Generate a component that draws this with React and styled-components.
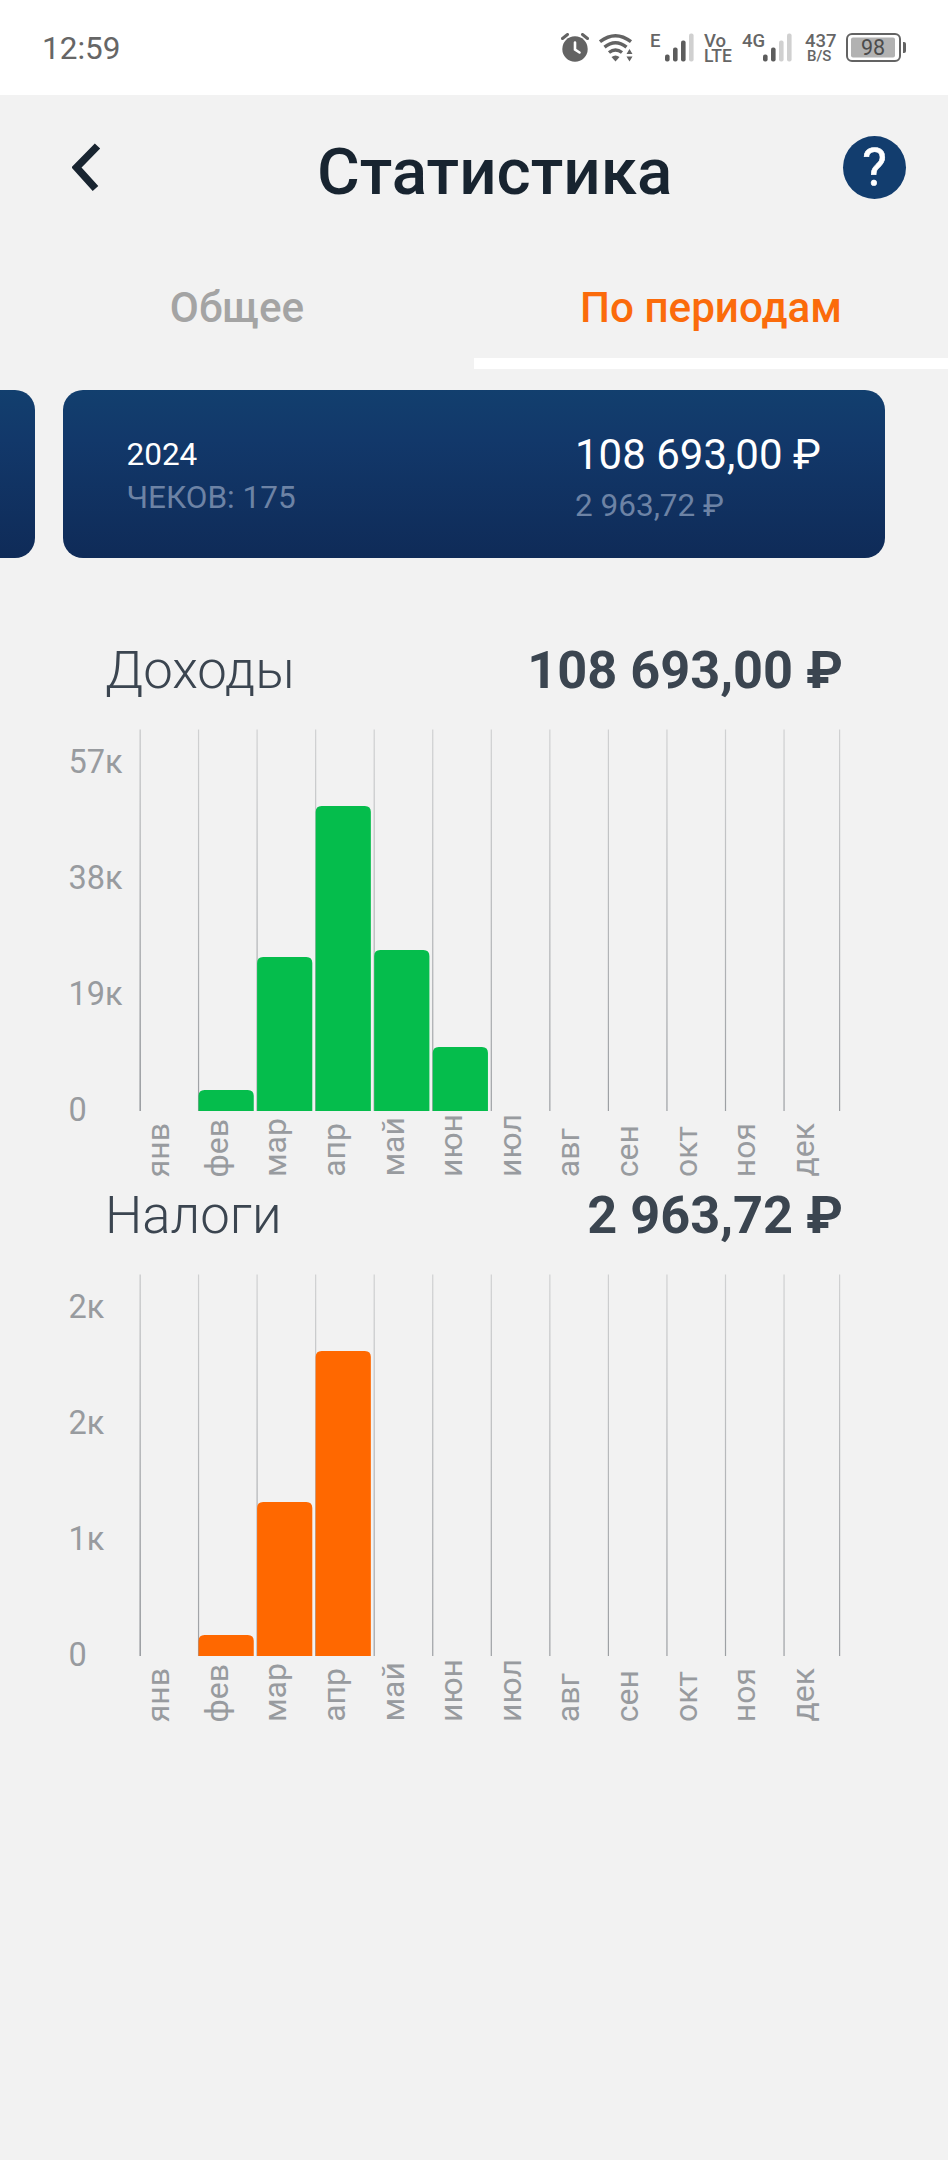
import React from "react";

import styled, {createGlobalStyle} from "styled-components";


const GlobalStyle = createGlobalStyle`
  body {
    margin: 0;
    background: #f2f2f2;
    font-family: Roboto, "Noto Sans", sans-serif;
  }

  * {
    box-sizing: border-box;
  }
`;

const Screen = styled.div`
  width: 948px;
  height: 2160px;
  overflow: hidden;
  background: #f2f2f2;
`;

const StatusBar = styled.div`
  height: 95px;
  padding: 3px 42px 0 42px;
  display: flex;
  justify-content: space-between;
  align-items: center;
  background: #ffffff;
  color: #666666;
`;
const Clock = styled.div`
  font-size: 31.5px;
  line-height: 38px;
`;
const StatusIcons = styled.div`
  height: 32px;
  display: flex;
  align-items: flex-start;
`;
const StatusIcon = styled.svg`
  display: block;
  flex: none;
  margin-right: ${props => props.$gap || 0}px;
`;
const Network = styled.div`
  width: ${props => props.$width}px;
  font-size: 18.5px;
  font-weight: 500;
  line-height: 16px;
`;
const NetworkSub = styled.div`
  padding-left: ${props => props.$indent || 0}px;
  font-size: ${props => props.$size}px;
  line-height: 15px;
`;

const Header = styled.div`
  height: 145px;
  padding: 0 42px 0 72px;
  display: flex;
  align-items: center;
`;
const BackIcon = styled.svg`
  display: block;
  width: 245px;
  height: 48px;
  margin-top: -2px;
`;
const Title = styled.div`
  flex: 1;
  padding-top: 8px;
  font-size: 65.5px;
  font-weight: 500;
  line-height: 76px;
  color: #182430;
`;
const Help = styled.div`
  width: 63px;
  height: 63px;
  border-radius: 50%;
  background: #123d6e;
  color: #ffffff;
  font-size: 52px;
  -webkit-text-stroke: 0.6px #ffffff;
  line-height: 64px;
  text-align: center;
`;

const Tabs = styled.div`
  display: flex;
`;
const Tab = styled.div`
  flex: 1;
  height: 129px;
  padding-top: 16px;
  border-bottom: 11px solid ${props => props.$active ? "#ffffff" : "transparent"};
  display: flex;
  align-items: center;
  justify-content: center;
  font-size: 42.2px;
  font-weight: 500;
  color: ${props => props.$active ? "#fb6b0b" : "#a4a4a4"};
`;

const Cards = styled.div`
  margin-top: 21px;
  height: 168px;
  display: flex;
  gap: 28px;
`;
const Card = styled.div`
  width: ${props => props.$cut ? 35 : 822}px;
  border-radius: ${props => props.$cut ? "0 20px 20px 0" : "20px"};
  background: linear-gradient(#123f6e, #12386a 30%, #0f2b58);
  display: flex;
  color: #ffffff;
`;
const Period = styled.div`
  width: 512px;
  padding: 43px 0 0 63.5px;
  font-size: 31.5px;
  line-height: 43px;
`;
const Sums = styled.div`
  padding-top: 39px;
  font-size: 42px;
  line-height: 51px;
`;
const Muted = styled.div`
  font-size: 31.5px;
  color: #6d83a5;
`;

const ChartSection = styled.div`
  height: 545px;
`;
const Charts = styled.div`
  padding-top: 76px;
`;
const ChartHeader = styled.div`
  height: 72px;
  padding: 0 105px;
  display: flex;
  justify-content: space-between;
  align-items: center;
  color: #3b4550;
`;
const ChartName = styled.div`
  font-size: 52.7px;
  font-weight: 300;
`;
const ChartTotal = styled.div`
  font-size: 52.3px;
  font-weight: 700;
`;
const ChartBody = styled.div`
  display: flex;
  color: #989b9f;
  font-size: 32px;
`;
const Scale = styled.div`
  width: 139px;
  height: 386px;
  margin-top: 37px;
  padding-left: 68.5px;
  display: flex;
  flex-direction: column;
  justify-content: space-between;
  font-size: 32.5px;
  line-height: 38px;
`;
const Plot = styled.svg`
  display: block;
  margin-top: 23px;
`;
const Months = styled.div`
  height: 66px;
  padding-left: 0.3px;
  display: grid;
  grid-template-columns: repeat(12, 58.6px);
  align-items: end;
`;
const Month = styled.div`
  width: 39px;
  line-height: 39px;
  writing-mode: vertical-rl;
  transform: rotate(180deg);
`;

const months = ["янв", "фев", "мар", "апр", "май", "июн", "июл", "авг", "сен", "окт", "ноя", "дек"];
const plotHeight = 382;
const step = 58.55;

const charts = [
    {id: "income", name: "Доходы", total: "108 693,00 ₽", color: "#05bd4c", scale: ["57к", "38к", "19к", "0"], bars: [0, 21, 154, 305, 161, 64]},
    {id: "taxes", name: "Налоги", total: "2 963,72 ₽", color: "#ff6800", scale: ["2к", "2к", "1к", "0"], bars: [0, 21, 154, 305]},
];

function barPath(i, h) {
    const x = i * step + 1;
    const top = plotHeight - h;
    return `M${x} ${plotHeight}V${top + 6}q0 -6 6 -6h43.2q6 0 6 6V${plotHeight}z`;
}

function Chart({id, name, total, color, scale, bars}) {
    // the last line closes the axis a bit earlier than a full step
    const lines = months.map((m, i) => i * step + 0.4).concat(700);
    return (
        <ChartSection>
            <ChartHeader>
                <ChartName>{name}</ChartName>
                <ChartTotal>{total}</ChartTotal>
            </ChartHeader>
            <ChartBody>
                <Scale>
                    {scale.map((label, i) => <div key={i}>{label}</div>)}
                </Scale>
                <div>
                    <Plot width="703" height={plotHeight}>
                        <defs>
                            <linearGradient id={id} x1="0" y1="0" x2="0" y2="1">
                                <stop offset="0" stopColor="#d0d1d2"/>
                                <stop offset="1" stopColor="#9c9fa3"/>
                            </linearGradient>
                        </defs>
                        {lines.map((x, i) => (
                            <rect key={i} x={x} y="0.5" width={i === 0 ? 1.6 : 1.2} height={plotHeight - 0.5} fill={`url(#${id})`}/>
                        ))}
                        {bars.map((h, i) => h > 0 && <path key={i} d={barPath(i, h)} fill={color}/>)}
                    </Plot>
                    <Months>
                        {months.map(m => <Month key={m}>{m}</Month>)}
                    </Months>
                </div>
            </ChartBody>
        </ChartSection>
    );
}

function Signal({level, gap}) {
    return (
        <StatusIcon width="29" height="32" $gap={gap}>
            {[0, 1, 2, 3].map(i => (
                <rect key={i} x={i * 8} y={21.5 - i * 7} width="4.6" height={7 + i * 7} rx="2" fill={i < level ? "#5c5c5c" : "#d0d0d0"}/>
            ))}
        </StatusIcon>
    );
}

function App() {
    return (
        <>
            <GlobalStyle/>
            <Screen>
                <StatusBar>
                    <Clock>12:59</Clock>
                    <StatusIcons>
                        <StatusIcon width="28" height="32" $gap={10}>
                            <circle cx="14" cy="16" r="12.7" fill="#636363"/>
                            <path d="M1.5 5.5L6.5 1.5M26.5 5.5L21.5 1.5" stroke="#636363" strokeWidth="3" strokeLinecap="round"/>
                            <path d="M14 9.5V16.5L18.5 19.5" stroke="#ffffff" strokeWidth="2.6" fill="none" strokeLinecap="round"/>
                        </StatusIcon>
                        <StatusIcon width="35" height="32" $gap={16}>
                            <g fill="none" stroke="#636363" strokeWidth="3.4">
                                <path d="M1 8.7Q16.5 -3.3 32 8.7"/>
                                <path d="M5.5 14.2Q16.5 5.5 27.5 14.2"/>
                                <path d="M10 19.5Q16.5 14.5 23 19.5"/>
                            </g>
                            <path d="M12.5 24Q16.5 21 20.5 24L16.5 28.5z" fill="#636363"/>
                            <path d="M27.5 21L30.5 16L33.5 21zM27.5 23.5L30.5 28.5L33.5 23.5z" fill="#636363"/>
                        </StatusIcon>
                        <Network $width={15}>E</Network>
                        <Signal level={3} gap={10}/>
                        <Network $width={38}>
                            Vo
                            <NetworkSub $size={17.5}>LTE</NetworkSub>
                        </Network>
                        <Network $width={21}>4G</Network>
                        <Signal level={2} gap={13}/>
                        <Network $width={41}>
                            437
                            <NetworkSub $size={15} $indent={2}>B/S</NetworkSub>
                        </Network>
                        <StatusIcon width="60" height="32">
                            <rect x="1" y="1" width="53" height="27" rx="5" fill="none" stroke="#636363" strokeWidth="2"/>
                            <rect x="5" y="4.5" width="44" height="20" rx="2" fill="#b2b2b2"/>
                            <path d="M57 9h1q2 0 2 2v7q0 2 -2 2h-1z" fill="#636363"/>
                            <text x="27" y="22.3" textAnchor="middle" fontSize="21.5" fill="#4c4c4c">98</text>
                        </StatusIcon>
                    </StatusIcons>
                </StatusBar>
                <Header>
                    <BackIcon viewBox="0 0 245 48">
                        <path d="M25.5 3L4.5 24.5L23.5 45.5" fill="none" stroke="#182430" strokeWidth="7.5"/>
                    </BackIcon>
                    <Title>Статистика</Title>
                    <Help>?</Help>
                </Header>
                <Tabs>
                    <Tab>Общее</Tab>
                    <Tab $active>По периодам</Tab>
                </Tabs>
                <Cards>
                    <Card $cut/>
                    <Card>
                        <Period>
                            2024
                            <Muted>ЧЕКОВ: 175</Muted>
                        </Period>
                        <Sums>
                            108 693,00 ₽
                            <Muted>2 963,72 ₽</Muted>
                        </Sums>
                    </Card>
                </Cards>
                <Charts>
                    {charts.map(chart => <Chart key={chart.id} {...chart}/>)}
                </Charts>
            </Screen>
        </>
    );
}

export default App;
